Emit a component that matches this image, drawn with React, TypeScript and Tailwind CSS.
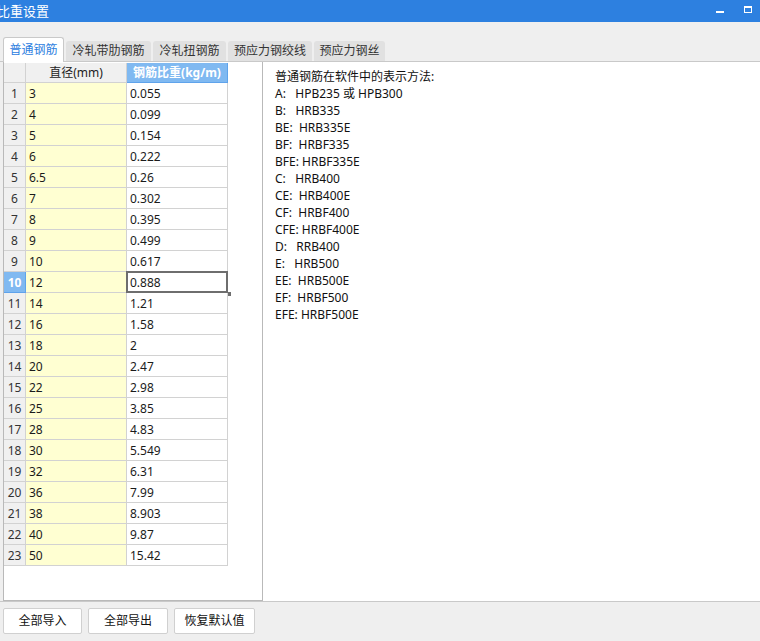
import React from "react";

const rows: [string, string][] = [
  ["3", "0.055"], ["4", "0.099"], ["5", "0.154"], ["6", "0.222"], ["6.5", "0.26"],
  ["7", "0.302"], ["8", "0.395"], ["9", "0.499"], ["10", "0.617"], ["12", "0.888"],
  ["14", "1.21"], ["16", "1.58"], ["18", "2"], ["20", "2.47"], ["22", "2.98"],
  ["25", "3.85"], ["28", "4.83"], ["30", "5.549"], ["32", "6.31"], ["36", "7.99"],
  ["38", "8.903"], ["40", "9.87"], ["50", "15.42"],
];

const lines = [
  "普通钢筋在软件中的表示方法:",
  "A:   HPB235 或 HPB300",
  "B:   HRB335",
  "BE:  HRB335E",
  "BF:  HRBF335",
  "BFE: HRBF335E",
  "C:   HRB400",
  "CE:  HRB400E",
  "CF:  HRBF400",
  "CFE: HRBF400E",
  "D:   RRB400",
  "E:   HRB500",
  "EE:  HRB500E",
  "EF:  HRBF500",
  "EFE: HRBF500E",
];

const tabs = [
  { label: "普通钢筋", w: "w-[61px]" },
  { label: "冷轧带肋钢筋", w: "w-[85px]" },
  { label: "冷轧扭钢筋", w: "w-[73px]" },
  { label: "预应力钢绞线", w: "w-[84px]" },
  { label: "预应力钢丝", w: "w-[71px]" },
];

const buttons = [
  { label: "全部导入", w: "w-[79px]" },
  { label: "全部导出", w: "w-[80px]" },
  { label: "恢复默认值", w: "w-[81px]" },
];

export default function App() {
  return (
    <div
      className="w-[760px] h-[641px] bg-[#efefef] flex flex-col overflow-hidden text-[#1b1b1b]"
      style={{ fontFamily: '"Noto Sans", "Noto Sans CJK SC", sans-serif' }}
    >
      {/* title bar */}
      <div className="h-[22px] bg-[#2d80e0] flex items-center justify-between shrink-0">
        <span className="text-white text-[13px] leading-none ml-[-3px]">比重设置</span>
        <div className="flex items-center h-full">
          <div className="w-[8px] h-[2px] bg-white mt-[2px] mr-[20px]" />
          <div className="w-[8px] h-[7px] border-[1.5px] border-white border-t-[2px] mr-[8px] mb-[4px]" />
        </div>
      </div>

      {/* tab bar */}
      <div className="h-[40px] shrink-0 flex items-end pl-[3px] gap-[2px] border-b border-[#c9c9c9]">
        {tabs.map((t, i) =>
          i === 0 ? (
            <div
              key={t.label}
              className={`${t.w} h-[25px] mb-[-1px] bg-white border border-b-0 border-[#c9c9c9] rounded-t-[3px] flex items-center justify-center text-[12px] text-[#2d80e0]`}
            >
              {t.label}
            </div>
          ) : (
            <div
              key={t.label}
              className={`${t.w} h-[20px] bg-[#e1e1e1] rounded-t-[3px] flex items-center justify-center text-[12px] text-[#333]`}
            >
              {t.label}
            </div>
          )
        )}
      </div>

      {/* content */}
      <div className="flex-1 flex pl-[3px] border-b border-[#c9c9c9] min-h-0">
        <div className="w-[260px] h-full bg-white border-l border-r border-b border-[#b9b9b9] pt-[1px]">
          <div className="grid grid-cols-[22px_101px_101px] text-[12px] leading-none w-[224px]">
            <div className="h-[20px] bg-[#f0f0f0] border-r border-b border-[#d2d2d2]" />
            <div className="h-[20px] bg-[#f0f0f0] border-r border-b border-[#d2d2d2] flex items-center justify-center text-[#222]">
              直径(mm)
            </div>
            <div className="h-[20px] bg-[#80b9f1] border-r border-b border-[#5fa3eb] flex items-center justify-center text-white font-bold">
              钢筋比重(kg/m)
            </div>
            {rows.map(([d, w], i) => {
              const sel = i === 9;
              return (
                <React.Fragment key={i}>
                  <div
                    className={
                      sel
                        ? "h-[21px] bg-[#80b9f1] border-r border-b border-[#5fa3eb] flex items-center justify-center pt-[1px] text-white font-bold"
                        : "h-[21px] bg-[#f0f0f0] border-r border-b border-[#d2d2d2] flex items-center justify-center pt-[1px] text-[#333]"
                    }
                  >
                    {i + 1}
                  </div>
                  <div className="h-[21px] bg-[#ffffd2] border-r border-b border-[#d2d2d2] flex items-center pl-[3px] pt-[1px]">
                    {d}
                  </div>
                  <div className="h-[21px] bg-white border-r border-b border-[#d2d2d2] flex items-center pl-[3px] pt-[1px] relative">
                    {w}
                    {sel && (
                      <>
                        <div className="absolute left-[-1px] top-[-1px] right-[-1px] bottom-[-1px] border-2 border-[#6e6e6e]" />
                        <div className="absolute right-[-4px] bottom-[-4px] w-[4px] h-[4px] bg-[#6e6e6e]" />
                      </>
                    )}
                  </div>
                </React.Fragment>
              );
            })}
          </div>
        </div>
        <div className="flex-1 h-full bg-white pl-[12px] pt-[6px]">
          {lines.map((l) => (
            <div key={l} className="text-[12px] leading-[17px] whitespace-pre text-[#111]">
              {l}
            </div>
          ))}
        </div>
      </div>

      {/* bottom buttons */}
      <div className="h-[39px] shrink-0 flex items-start pt-[6px] pl-[3px] gap-[6px]">
        {buttons.map((b) => (
          <div
            key={b.label}
            className={`${b.w} h-[26px] bg-white border border-[#d0d0d0] rounded-[2px] flex items-center justify-center text-[12px] text-[#111]`}
          >
            {b.label}
          </div>
        ))}
      </div>
    </div>
  );
}
